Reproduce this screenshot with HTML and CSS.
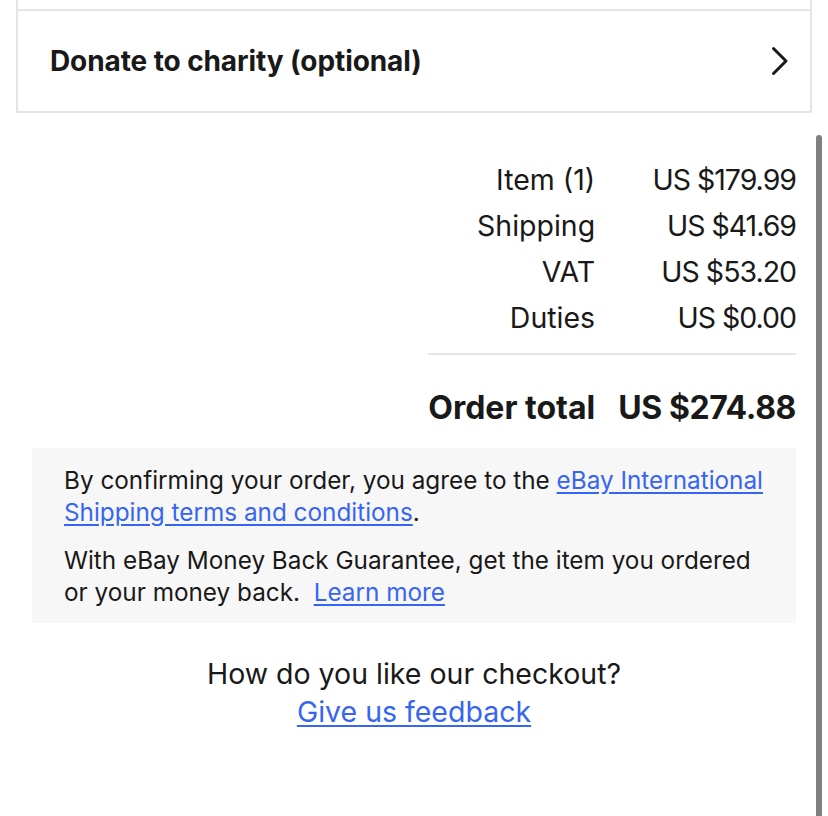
FILE: index.html
```html
<!DOCTYPE html>
<html lang="en">
<head>
<meta charset="utf-8">
<title>Checkout</title>
<link rel="stylesheet" href="styles.css">
</head>
<body>
<div class="page">
  <div class="prev-card"></div>
  <div class="card">
    <span class="card-title">Donate to charity (optional)</span>
    <svg class="chevron" width="20" height="30" viewBox="0 0 20 30" aria-hidden="true">
      <path d="M3.5 2.5 L16 15 L3.5 27.5" fill="none" stroke="#191919" stroke-width="3" stroke-linecap="round" stroke-linejoin="round"/>
    </svg>
  </div>

  <div class="content">
    <div class="summary">
      <span class="label">Item (1)</span><span class="value">US $179.99</span>
      <span class="label">Shipping</span><span class="value">US $41.69</span>
      <span class="label">VAT</span><span class="value">US $53.20</span>
      <span class="label">Duties</span><span class="value">US $0.00</span>
      <div class="divider"></div>
      <span class="label total">Order total</span><span class="value total">US $274.88</span>
    </div>

    <div class="notice">
      <p>By confirming your order, you agree to the <a href="#">eBay International Shipping terms and conditions</a>.</p>
      <p>With eBay Money Back Guarantee, get the item you ordered or your money back. &nbsp;<a href="#">Learn more</a></p>
    </div>

    <div class="feedback">
      <div>How do you like our checkout?</div>
      <a href="#">Give us feedback</a>
    </div>
  </div>
</div>
<div class="scrollbar"></div>
</body>
</html>
```

FILE: styles.css
```css
html, body {
  margin: 0;
  padding: 0;
  background: #ffffff;
}
body {
  font-family: Inter, "Liberation Sans", sans-serif;
  color: #191919;
  overflow: hidden;
}
.page {
  width: 796px;
  margin-left: 16px;
}
.prev-card {
  height: 9px;
  border-left: 2px solid #e5e5e5;
  border-right: 2px solid #e5e5e5;
}
.card {
  height: 100px;
  border: 2px solid #e5e5e5;
  display: flex;
  align-items: center;
  justify-content: space-between;
  padding: 0 20px 0 32px;
}
.card-title {
  font-size: 28px;
  font-weight: 700;
  letter-spacing: -0.1px;
}
.chevron {
  display: block;
}
.content {
  padding: 44px 16px 0 16px;
}
.summary {
  display: grid;
  grid-template-columns: auto auto;
  justify-content: end;
  column-gap: 23px;
  font-size: 28.5px;
}
.summary .label,
.summary .value {
  text-align: right;
  line-height: 46px;
  white-space: nowrap;
}
.summary .value {
  letter-spacing: -1px;
}
.divider {
  grid-column: 1 / -1;
  height: 2px;
  background: #e5e5e5;
  margin: 12px 0 30px 0;
}
.summary .total {
  font-weight: 700;
  font-size: 32px;
  letter-spacing: 0;
}
.summary .value.total {
  letter-spacing: -0.4px;
}
.notice {
  margin-top: 17px;
  background: #f7f7f7;
  padding: 16px 32px 15px 32px;
  font-size: 24.3px;
  line-height: 32px;
}
.notice p {
  margin: 0;
}
.notice p + p {
  margin-top: 16px;
}
a {
  color: #3665f3;
  text-decoration: underline;
  text-underline-offset: 3px;
}
.feedback {
  margin-top: 32px;
  text-align: center;
  font-size: 28.5px;
  line-height: 38px;
}
.scrollbar {
  position: fixed;
  right: 6px;
  top: 135px;
  width: 6px;
  height: 700px;
  background: #808080;
  border-radius: 3px;
}
```
